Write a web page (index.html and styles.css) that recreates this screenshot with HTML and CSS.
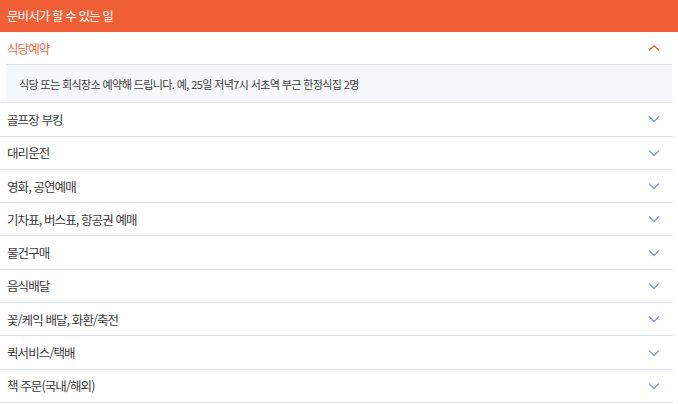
FILE: index.html
```html
<!DOCTYPE html>
<html lang="ko">
<head>
    <meta charset="UTF-8">
    <meta name="viewport" content="width=device-width, initial-scale=1.0">
    <title>문비서가 할 수 있는 일</title>
    <link rel="stylesheet" href="styles.css">
</head>
<body>

<div class="header">문비서가 할 수 있는 일</div>

<ul class="faq">
    <li class="item open">
        <div class="title">
            <span>식당예약</span>
            <svg class="chev" viewBox="0 0 12 8"><path d="M1 6.5 L6 1.5 L11 6.5"/></svg>
        </div>
        <div class="detail">식당 또는 회식장소 예약해 드립니다. 예, 25일 저녁7시 서초역 부근 한정식집 2명</div>
    </li>
    <li class="item"><div class="title"><span>골프장 부킹</span><svg class="chev" viewBox="0 0 12 8"><path d="M1 1.5 L6 6.5 L11 1.5"/></svg></div></li>
    <li class="item"><div class="title"><span>대리운전</span><svg class="chev" viewBox="0 0 12 8"><path d="M1 1.5 L6 6.5 L11 1.5"/></svg></div></li>
    <li class="item"><div class="title"><span>영화, 공연예매</span><svg class="chev" viewBox="0 0 12 8"><path d="M1 1.5 L6 6.5 L11 1.5"/></svg></div></li>
    <li class="item"><div class="title"><span>기차표, 버스표, 항공권 예매</span><svg class="chev" viewBox="0 0 12 8"><path d="M1 1.5 L6 6.5 L11 1.5"/></svg></div></li>
    <li class="item"><div class="title"><span>물건구매</span><svg class="chev" viewBox="0 0 12 8"><path d="M1 1.5 L6 6.5 L11 1.5"/></svg></div></li>
    <li class="item"><div class="title"><span>음식배달</span><svg class="chev" viewBox="0 0 12 8"><path d="M1 1.5 L6 6.5 L11 1.5"/></svg></div></li>
    <li class="item"><div class="title"><span>꽃/케익 배달, 화환/축전</span><svg class="chev" viewBox="0 0 12 8"><path d="M1 1.5 L6 6.5 L11 1.5"/></svg></div></li>
    <li class="item"><div class="title"><span>퀵서비스/택배</span><svg class="chev" viewBox="0 0 12 8"><path d="M1 1.5 L6 6.5 L11 1.5"/></svg></div></li>
    <li class="item"><div class="title"><span>책 주문(국내/해외)</span><svg class="chev" viewBox="0 0 12 8"><path d="M1 1.5 L6 6.5 L11 1.5"/></svg></div></li>
</ul>

</body>
</html>
```

FILE: styles.css
```css
/* Reset */
* {
    margin: 0;
    padding: 0;
    box-sizing: border-box;
}

body {
    font-family: "Noto Sans CJK KR", "Noto Sans", sans-serif;
    background-color: #fff;
    color: #3a3a3a;
    width: 678px;
    overflow: hidden;
}

.header {
    height: 32px;
    line-height: 32px;
    padding-left: 7px;
    background-color: #f15f37;
    color: #fff;
    font-size: 12.5px;
    letter-spacing: -0.9px;
}

.faq {
    list-style: none;
    width: 673px;
}

.item {
    border-bottom: 1px solid #dde2ea;
}

.title {
    display: flex;
    justify-content: space-between;
    align-items: center;
    height: 32.3px;
    padding: 0 13px 0 7px;
    font-size: 12.5px;
    letter-spacing: -0.9px;
}

.item.open .title {
    color: #f26a45;
}

.chev {
    width: 12px;
    height: 8px;
    fill: none;
    stroke: #8a9cc0;
    stroke-width: 1.4;
}

.item.open .chev {
    stroke: #f26a45;
}

.detail {
    margin: 0 1px 0 6px;
    padding: 0 13px;
    height: 38px;
    line-height: 38px;
    background-color: #f6f7f9;
    border-top: 1px solid #dde2ea;
    font-size: 11px;
    letter-spacing: -0.6px;
}
```
